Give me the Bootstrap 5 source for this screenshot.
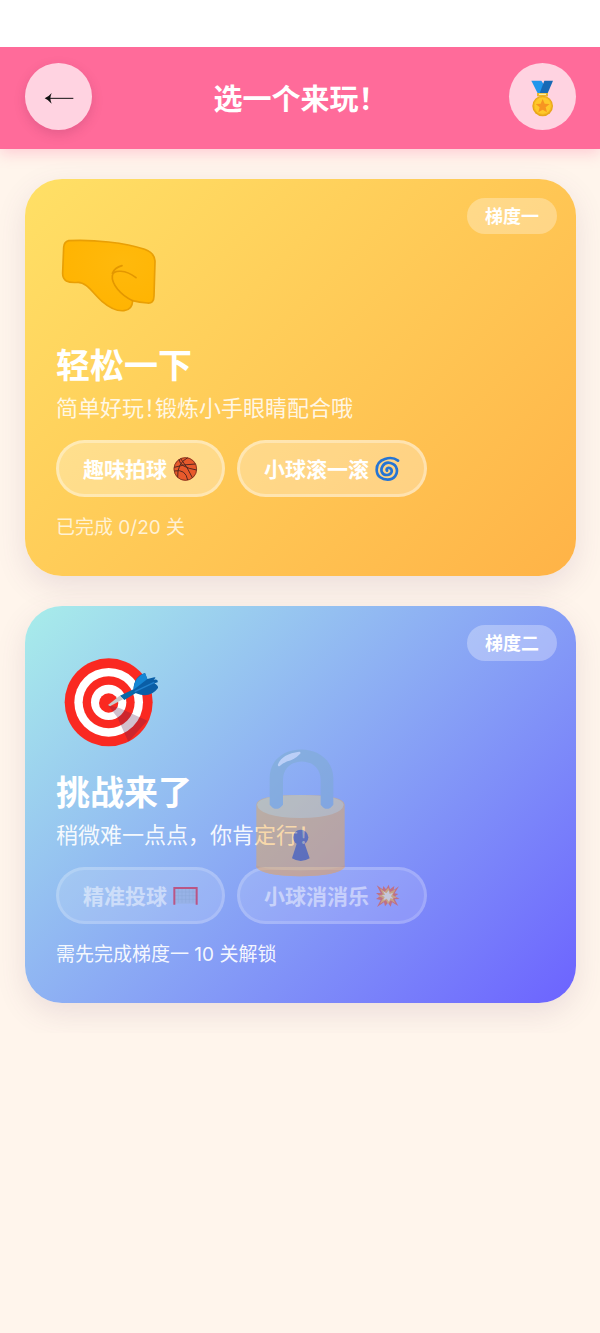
<!DOCTYPE html>
<html lang="zh-CN">
<head>
<meta charset="utf-8">
<meta name="viewport" content="width=device-width, initial-scale=1">
<title>选一个来玩！</title>
<link rel="stylesheet" href="https://cdn.jsdelivr.net/npm/bootstrap@5.3.0/dist/css/bootstrap.min.css">
<style>
body { background: #fff5ec; font-family: "Noto Sans CJK SC", sans-serif; }
.status-strip { height: 47px; background: #fff; }
.top-bar { background: #ff6b9a; padding: 16px 24px 19px 25px; box-shadow: 0 4px 14px rgba(255,107,154,.3); clip-path: inset(0 0 -30px 0); }
.top-bar h1 { font-size: 29px; line-height: 44px; }
.round-btn { width: 67px; height: 67px; background: rgba(255,255,255,.7); box-shadow: 0 4px 12px rgba(120,40,80,.2); }
.round-btn.flat { box-shadow: none; }
.levels { padding: 30px 24px 30px 25px; gap: 30px; }
.level-card { border-radius: 37px; padding: 30px 31px 32px; box-shadow: 0 10px 30px rgba(100,70,110,.13); }
.level-easy { background: linear-gradient(135deg, #ffe066, #ffb347); }
.level-hard { background: linear-gradient(135deg, #a8edea, #6c63ff); }
.level-art { width: 110px; height: 130px; }
.level-card h2 { font-size: 34px; line-height: 50px; }
.level-desc { font-size: 22px; line-height: 34px; color: rgba(255,255,255,.85); }
.half-mark { font-feature-settings: "halt"; }
.level-foot { font-family: Inter, "Noto Sans CJK SC", sans-serif; font-size: 19px; line-height: 32px; margin-top: 15px; color: rgba(255,255,255,.75); }
.level-hard .level-desc, .level-hard .level-foot { color: rgba(255,255,255,.93); }
.tier { top: 19px; right: 19px; font-size: 18px; line-height: 34px; height: 36px; padding: 0 18px; background: rgba(255,255,255,.3); }
.chips { gap: 12px; margin-top: 17px; }
.chip { height: 57px; padding: 0 24px; gap: 6px; font-size: 21px; line-height: 30px; border: 3px solid rgba(255,255,255,.35); background: rgba(255,255,255,.3) border-box; }
.chip:disabled { opacity: .55; border-color: rgba(255,255,255,.35); background: rgba(255,255,255,.25) border-box; }
.chip span { margin-top: -2px; }
.chip svg { width: 25px; height: 25px; }
.lock { width: 140px; height: 160px; opacity: .4; pointer-events: none; }
</style>
<script src="https://cdn.jsdelivr.net/npm/bootstrap@5.3.0/dist/js/bootstrap.bundle.min.js"></script>
</head>
<body>
<div class="status-strip"></div>
<header class="top-bar d-flex align-items-center justify-content-between position-relative">
  <button type="button" class="round-btn btn border-0 rounded-circle p-0 d-flex align-items-center justify-content-center" aria-label="返回">
    <svg width="36" height="20" viewBox="121 169 108 60"><path d="M145 203H218" stroke="#111" stroke-width="3"/><path d="M132 203Q144 198 153 187Q149 197 149 203Q149 209 153 219Q144 208 132 203Z" fill="#111"/></svg>
  </button>
  <h1 class="m-0 fw-bold text-white">选一个来玩！</h1>
  <button type="button" class="round-btn flat btn border-0 rounded-circle p-0 d-flex align-items-center justify-content-center" aria-label="奖牌">
    <svg width="36" height="40" viewBox="672 139 108 120"><path d="M694 150H724L733 164L727 188H713Z" fill="#2196ec"/><path d="M733 150H759L743 188H719Z" fill="#1769b5"/><path d="M711 187H744V197H711Z" fill="#e9b52c"/><path d="M717 191H738" stroke="#fff0a0" stroke-width="4"/><circle cx="728" cy="226" r="31" fill="#e9a51b"/><circle cx="728" cy="225" r="26" fill="#ffc82a" stroke="#f5bb20" stroke-width="3"/><path d="M728 205L734 219L749 220L737 230L741 245L728 237L715 245L719 230L707 220L722 219Z" fill="#f79521"/></svg>
  </button>
</header>
<main class="levels d-flex flex-column">
  <section class="level-card level-easy position-relative text-white">
    <span class="tier position-absolute rounded-pill fw-bold">梯度一</span>
    <svg class="level-art d-block" viewBox="108 -3 330 390" aria-hidden="true">
      <defs><radialGradient id="skin" cx=".65" cy=".3" r=".8"><stop offset="0" stop-color="#ffb90c"/><stop offset="1" stop-color="#ffb300"/></radialGradient></defs>
      <path d="M146 92C220 88 315 98 374 118Q404 129 405 153L402 258Q402 281 382 279Q358 278 338 272Q337 299 312 302Q282 305 246 274C220 251 199 216 174 217Q150 219 139 213Q127 206 128 188L131 112Q132 95 146 92Z" fill="url(#skin)" stroke="#e99f05" stroke-width="5" stroke-linejoin="round"/>
      <path d="M338 272C302 256 274 222 277 197C280 178 318 179 348 203M277 190Q284 173 306 167" fill="none" stroke="#e39700" stroke-width="5" stroke-linecap="round"/>
    </svg>
    <h2 class="m-0 fw-bold">轻松一下</h2>
    <p class="level-desc m-0">简单好玩<span class="half-mark">！</span>锻炼小手眼睛配合哦</p>
    <div class="chips d-flex flex-wrap">
      <button type="button" class="chip btn rounded-pill fw-bold text-white d-flex align-items-center"><span>趣味拍球</span>
        <svg viewBox="0 0 75 75"><circle cx="37" cy="39" r="35" fill="#e8592b"/><g fill="none" stroke="#57291f" stroke-width="3"><circle cx="37" cy="39" r="34" stroke-width="2"/><path d="M18 10Q20 34 71 42M44 5Q12 22 14 64M4 34Q34 24 68 24M4 45Q38 38 44 72M23 8Q44 34 58 65"/></g></svg>
      </button>
      <button type="button" class="chip btn rounded-pill fw-bold text-white d-flex align-items-center"><span>小球滚一滚</span>
        <svg viewBox="0 0 75 75"><path d="M69 14C50-1 5 6 5 41C5 62 22 71 38 71C58 71 69 54 65 38C61 20 33 13 23 30C14 45 23 58 37 57C50 56 54 43 46 37C39 33 32 39 36 44" fill="none" stroke="#2574d4" stroke-width="8" stroke-linecap="round"/></svg>
      </button>
    </div>
    <p class="level-foot mb-0">已完成 0/20 关</p>
  </section>

  <section class="level-card level-hard position-relative text-white">
    <span class="tier position-absolute rounded-pill fw-bold">梯度二</span>
    <svg class="level-art d-block" viewBox="108 108 330 390" aria-hidden="true">
      <defs><clipPath id="disc"><circle cx="266" cy="307" r="132"/></clipPath></defs>
      <circle cx="266" cy="307" r="132" fill="#fa2921"/><circle cx="266" cy="307" r="103" fill="#fff"/><circle cx="266" cy="307" r="78" fill="#fa2921"/><circle cx="266" cy="307" r="53" fill="#fff"/><circle cx="266" cy="309" r="29" fill="#fa2921"/>
      <path d="M263 314L300 325L382 362L325 425L292 352Z" fill="#5b1c50" opacity=".28" clip-path="url(#disc)"/>
      <path d="M264 315L299 287L309 298L270 319Z" fill="#c9c9c9"/>
      <path d="M300 287L342 267L349 278L313 300Z" fill="#0768a8"/>
      <path d="M340 272Q341 228 375 219L382 237L403 232Q411 232 401 239Q415 236 413 247L403 250Q416 258 414 264Q390 297 348 280Z" fill="#0a5ea6"/>
      <path d="M340 270Q343 229 375 219L382 237Z" fill="#1686d4"/><path d="M344 275L403 247" stroke="#2080cc" stroke-width="4"/>
    </svg>
    <h2 class="m-0 fw-bold">挑战来了</h2>
    <p class="level-desc m-0">稍微难一点点，你肯定行！</p>
    <div class="chips d-flex flex-wrap">
      <button type="button" disabled class="chip btn rounded-pill fw-bold text-white d-flex align-items-center"><span>精准投球</span>
        <svg viewBox="0 0 75 75"><path d="M5 16H70V62H5Z" fill="#9fb4cc" opacity=".6"/><path d="M16 16V59M27 16V59M38 16V59M49 16V59M60 16V59M5 27H70M5 38H70M5 49H70" stroke="#8aa5c5" stroke-width="1.5"/><path d="M4 65V15H71V65" fill="none" stroke="#e0102c" stroke-width="6"/></svg>
      </button>
      <button type="button" disabled class="chip btn rounded-pill fw-bold text-white d-flex align-items-center"><span>小球消消乐</span>
        <svg viewBox="0 0 75 75"><path d="M5 7L23 19L25 9L33 19L41 5L45 19L58 9L56 21L72 10L59 31L70 33L60 40L74 48L59 49L70 69L51 58L47 71L39 59L30 70L27 58L6 72L17 51L3 48L15 40L3 30L17 30Z" fill="#f2592b"/><path d="M15 16L29 26L40 14L45 27L62 19L53 36L66 44L53 46L61 61L47 52L39 64L33 51L15 62L24 45L9 39L24 34Z" fill="#ffb52c"/><path d="M24 24L34 31L41 22L44 33L54 29L48 40L56 47L46 46L42 56L35 47L25 52L29 42L20 37L30 36Z" fill="#fff6c5"/></svg>
      </button>
    </div>
    <p class="level-foot mb-0">需先完成梯度一 10 关解锁</p>
    <svg class="lock position-absolute top-50 start-50 translate-middle" viewBox="2 -14 420 480" aria-hidden="true">
      <path d="M78 225Q78 196 210 196Q342 196 343 225V412Q325 438 210 440Q95 438 78 412Z" fill="#ffad32"/>
      <path d="M80 225Q84 197 210 196Q336 197 340 225Q335 262 210 265Q86 262 80 225Z" fill="#f5d67a"/>
      <path d="M118 225V145C118 31 306 31 309 145V225Q290 250 271 225V150C271 77 158 77 158 150V225Q138 250 118 225Z" fill="#7aabc4"/>
      <path d="M146 106Q158 76 207 70Q190 88 168 92Q156 98 146 106Z" fill="#fff" stroke="#fff" stroke-width="7" stroke-linejoin="round"/>
      <circle cx="211" cy="323" r="23" fill="#20286a"/><path d="M201 336H221L238 386Q211 402 185 386Z" fill="#20286a"/>
      <path d="M78 407Q97 421 210 423Q323 421 343 407V413Q325 438 210 440Q95 438 78 413Z" fill="#ff9d22"/>
    </svg>
  </section>
</main>
</body>
</html>
